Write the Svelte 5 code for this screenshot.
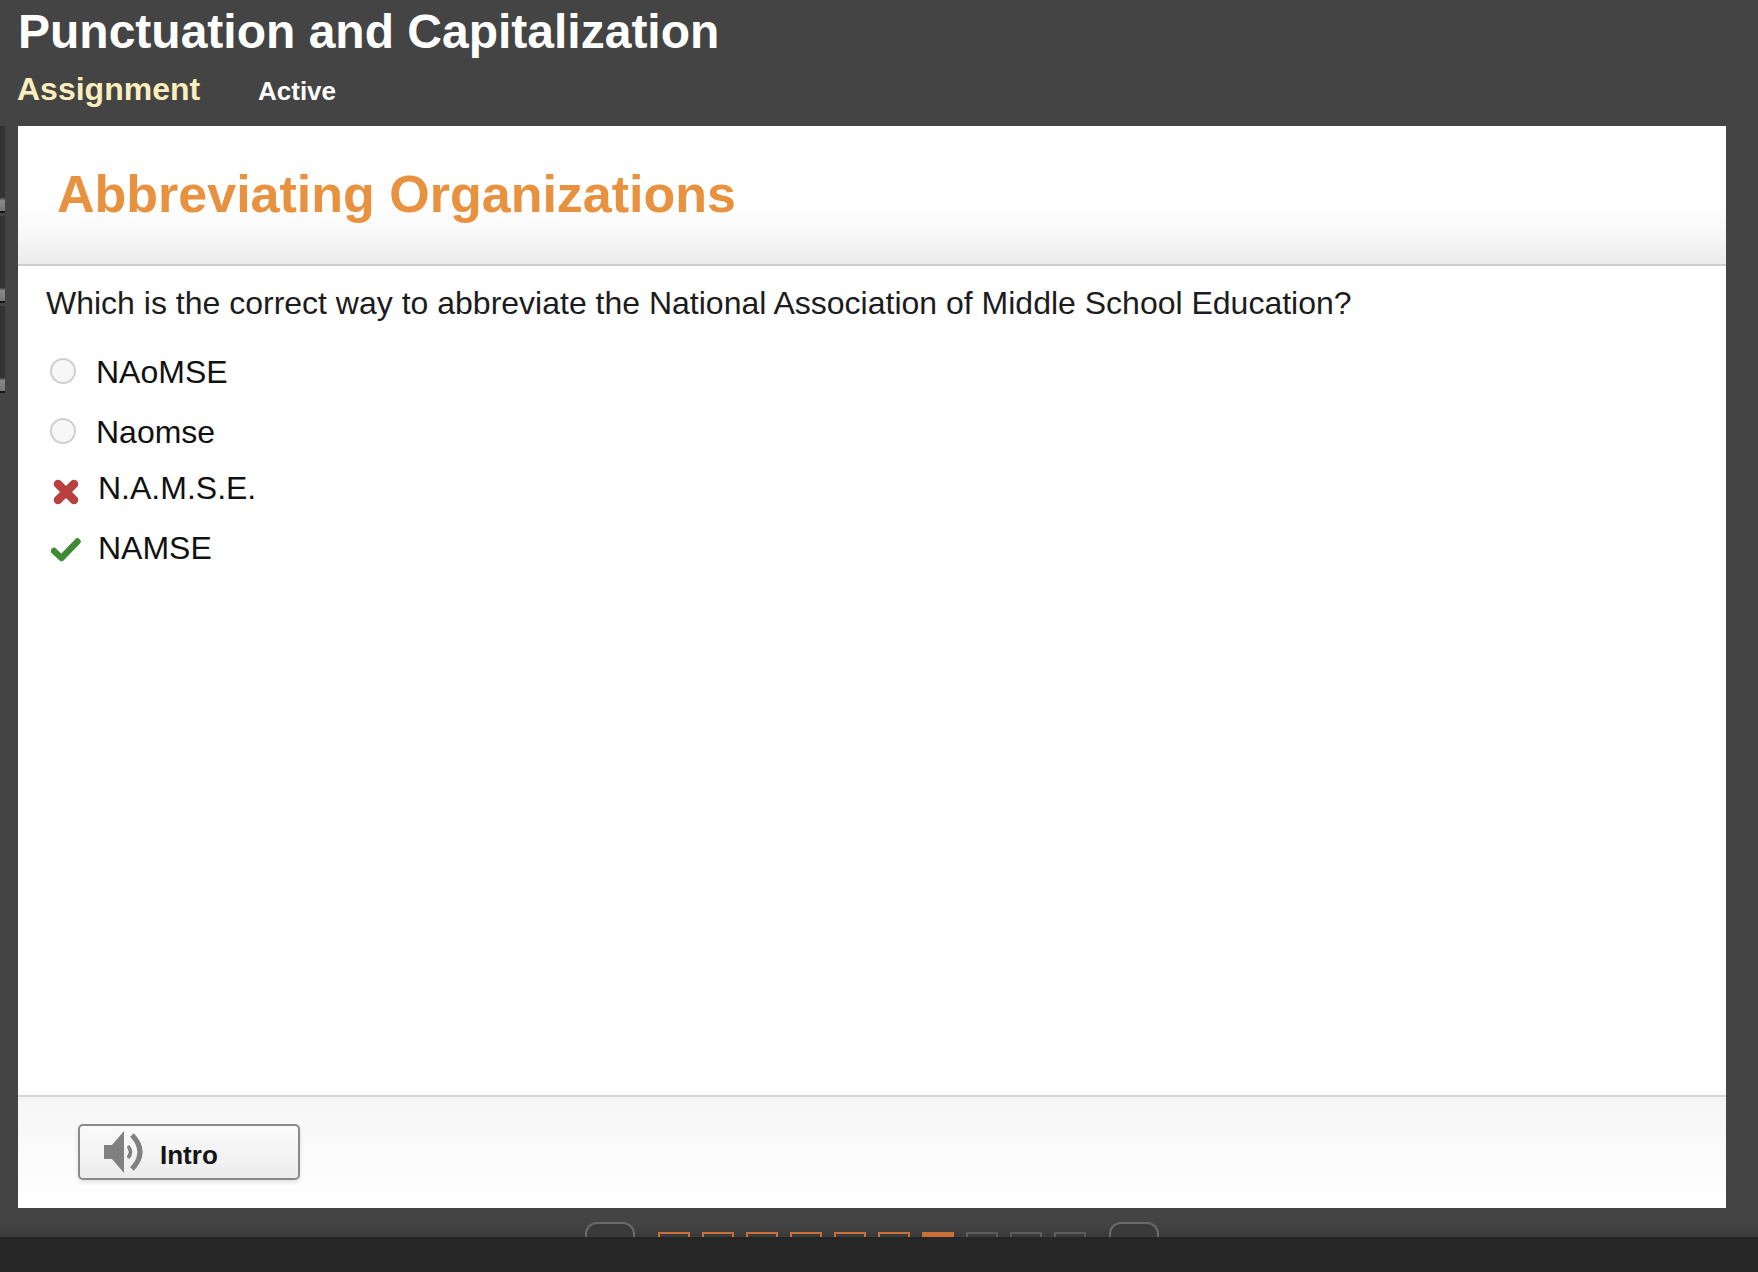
<script>
    const options = [
        { label: 'NAoMSE', mark: 'radio' },
        { label: 'Naomse', mark: 'radio' },
        { label: 'N.A.M.S.E.', mark: 'wrong' },
        { label: 'NAMSE', mark: 'right' }
    ];
    const pages = ['done', 'done', 'done', 'done', 'done', 'done', 'current', 'todo', 'todo', 'todo'];
    const tabs = [0, 1, 2];
</script>

<div class="page">
    <header>
        <h1>Punctuation and Capitalization</h1>
        <div class="sub">
            <span class="kind">Assignment</span>
            <span class="status">Active</span>
        </div>
    </header>

    <div class="middle">
        <div class="rail">
            {#each tabs as t (t)}
                <div class="tab"></div>
            {/each}
        </div>
        <main class="card">
            <div class="band">
                <h2>Abbreviating Organizations</h2>
            </div>
            <div class="body">
                <p class="question">Which is the correct way to abbreviate the National Association of Middle School Education?</p>
                <ul>
                    {#each options as o (o.label)}
                        <li class={o.mark}>
                            {#if o.mark === 'radio'}
                                <span class="dot"></span>
                            {:else if o.mark === 'wrong'}
                                <svg class="mark cross" width="30" height="30" viewBox="0 0 30 30">
                                    <path d="M7 7 L23 23 M23 7 L7 23" stroke="#b8413f" stroke-width="8.5" stroke-linecap="round" fill="none" />
                                </svg>
                            {:else}
                                <svg class="mark" width="30" height="30" viewBox="0 0 30 30">
                                    <path d="M3 16 L10.5 23 L26.5 6.5" stroke="#3f8a34" stroke-width="6.4" stroke-linejoin="round" stroke-linecap="round" fill="none" />
                                </svg>
                            {/if}
                            <span>{o.label}</span>
                        </li>
                    {/each}
                </ul>
            </div>
            <footer>
                <button type="button">
                    <svg width="42" height="46" viewBox="0 0 42 46">
                        <path d="M1 16 H9 L21 2 V44 L9 30 H1 Z" fill="#808080" />
                        <path d="M25 17 Q30 23 25 29" stroke="#808080" stroke-width="3.5" fill="none" />
                        <path d="M29 6 Q45 23 29 40" stroke="#808080" stroke-width="5" fill="none" />
                    </svg>
                    <span class="label">Intro</span>
                </button>
            </footer>
        </main>
    </div>

    <nav>
        <div class="arrow"></div>
        <div class="pages">
            {#each pages as p, i (i)}
                <span class={p}></span>
            {/each}
        </div>
        <div class="arrow"></div>
    </nav>
    <div class="bottom"></div>
</div>

<style>
    :global(body) {
        background: #444;
    }

    .page {
        width: 1758px;
        height: 1272px;
        display: flex;
        flex-direction: column;
        overflow: hidden;
        background: #444;
        font-family: "Liberation Sans", Arial, sans-serif;
    }

    header {
        height: 126px;
        box-sizing: border-box;
        padding: 4px 0 0 18px;
        color: #fff;
    }

    h1 {
        margin: 0;
        font-size: 48px;
        line-height: 56px;
        font-weight: 700;
    }

    .sub {
        display: flex;
        align-items: baseline;
        margin-top: 10px;
        margin-left: -1px;
    }

    .kind {
        font-size: 32px;
        line-height: 38px;
        font-weight: 700;
        color: #f9eebc;
        width: 241px;
    }

    .status {
        font-size: 26px;
        font-weight: 700;
    }

    .middle {
        display: flex;
        height: 1082px;
    }

    .rail {
        width: 18px;
        flex: none;
        display: flex;
        flex-direction: column;
        gap: 3px;
    }

    .tab {
        width: 5px;
        height: 87px;
        box-sizing: border-box;
        background: linear-gradient(#333 84%, #8a8a8a 88%, #777 98%);
        border-bottom: 2px solid #151515;
    }

    .card {
        width: 1708px;
        flex: none;
        display: flex;
        flex-direction: column;
        background: #fff;
    }

    .band {
        height: 140px;
        box-sizing: border-box;
        padding: 38px 0 0 39px;
        background: linear-gradient(#fff 55%, #f8f8f8 78%, #ebebeb);
        border-bottom: 2px solid #cfcfcf;
    }

    h2 {
        margin: 0;
        font-size: 52px;
        line-height: 60px;
        font-weight: 700;
        color: #e8913f;
    }

    .body {
        flex: 1;
        padding: 17px 0 0 28px;
        color: #1c1c1c;
    }

    .question {
        margin: 0;
        font-size: 32px;
        line-height: 40px;
    }

    ul {
        list-style: none;
        margin: 19px 0 0;
        padding: 0;
    }

    li {
        display: flex;
        align-items: center;
        height: 60px;
        font-size: 32px;
        color: #111;
    }

    li.wrong {
        margin-top: -4px;
    }

    .dot {
        width: 26px;
        height: 26px;
        flex: none;
        box-sizing: border-box;
        margin: -2px 20px 0 4px;
        border-radius: 50%;
        border: 2px solid #cfcfcf;
        background: #f7f7f7;
    }

    .mark {
        flex: none;
        margin: 4px 17px 0 5px;
    }

    .cross {
        margin-top: 7px;
    }

    footer {
        height: 113px;
        box-sizing: border-box;
        padding: 27px 0 0 60px;
        border-top: 2px solid #d6d6d6;
        background: linear-gradient(#f6f6f6, #fff);
    }

    button {
        width: 222px;
        height: 56px;
        padding: 0 0 0 23px;
        display: flex;
        align-items: center;
        gap: 15px;
        border: 2px solid #8a8a8a;
        border-radius: 5px;
        background: linear-gradient(#fbfbfb, #ececec);
        box-shadow: 0 2px 4px rgba(0, 0, 0, 0.12);
        font-family: "Liberation Sans", Arial, sans-serif;
        font-size: 26px;
        font-weight: 700;
        color: #151515;
    }

    .label {
        padding-top: 7px;
    }

    nav {
        height: 29px;
        flex: none;
        box-sizing: border-box;
        padding: 14px 0 0 585px;
        display: flex;
        align-items: flex-start;
        overflow: hidden;
        background: linear-gradient(#444 55%, #3a3a3a);
    }

    .arrow {
        width: 50px;
        height: 40px;
        flex: none;
        box-sizing: border-box;
        border: 2px solid #6a6a6a;
        border-radius: 12px;
        background: #3a3a3a;
    }

    .pages {
        display: flex;
        gap: 12px;
        width: 428px;
        margin: 10px 23px 0 23px;
    }

    .pages span {
        width: 32px;
        height: 30px;
        flex: none;
        box-sizing: border-box;
        border: 2px solid #5c5c5c;
    }

    .pages .done {
        border-color: #c86f3a;
    }

    .pages .current {
        border-color: #c86f3a;
        background: #c86f3a;
    }

    .bottom {
        flex: 1;
        background: #262626;
    }
</style>
